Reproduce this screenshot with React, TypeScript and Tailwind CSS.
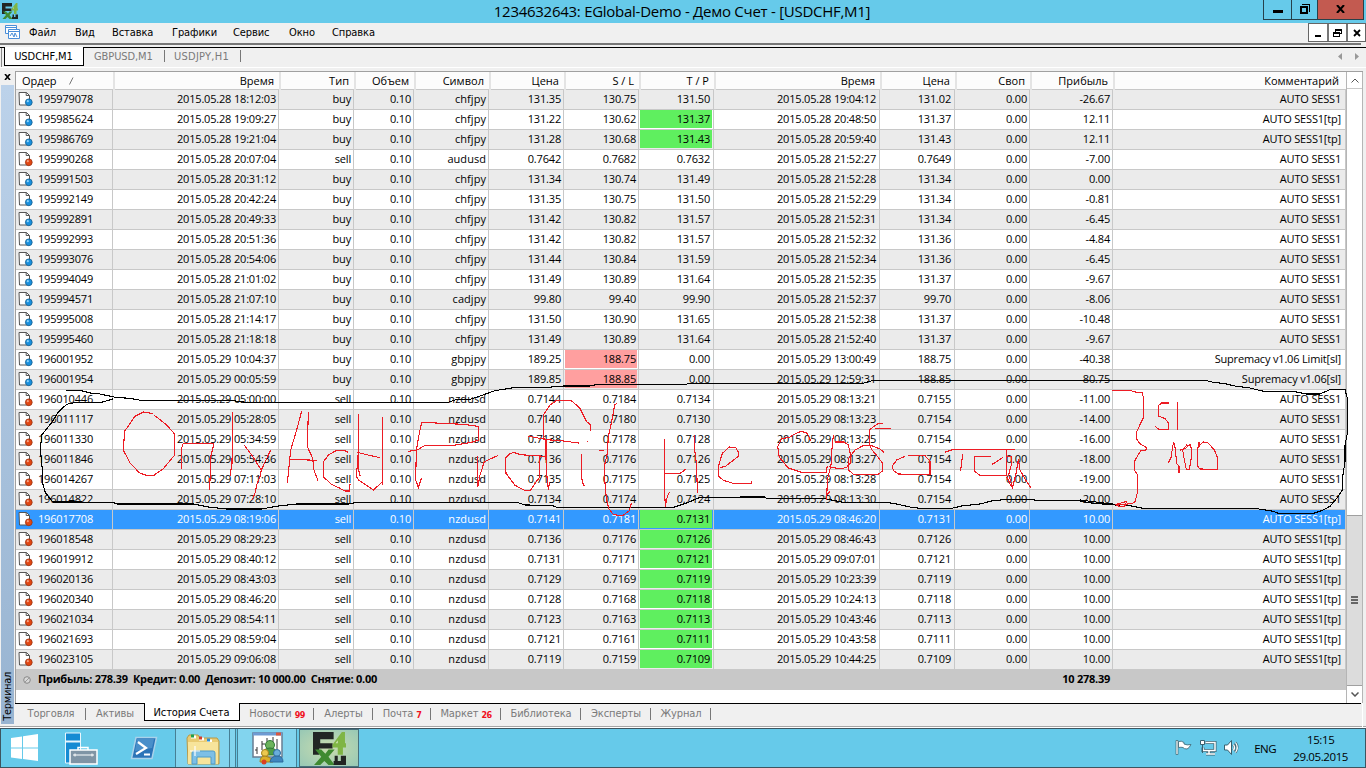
import type { ReactNode } from 'react';
import clsx from 'clsx';

type Order = {
  id: string;
  opened: string;
  type: 'buy' | 'sell';
  symbol: string;
  price: string;
  sl: string;
  tp: string;
  closed: string;
  closePrice: string;
  profit: string;
  comment: string;
};

const raw = `195979078|2015.05.28 18:12:03|buy|chfjpy|131.35|130.75|131.50|2015.05.28 19:04:12|131.02|-26.67|AUTO SESS1
195985624|2015.05.28 19:09:27|buy|chfjpy|131.22|130.62|131.37|2015.05.28 20:48:50|131.37|12.11|AUTO SESS1[tp]
195986769|2015.05.28 19:21:04|buy|chfjpy|131.28|130.68|131.43|2015.05.28 20:59:40|131.43|12.11|AUTO SESS1[tp]
195990268|2015.05.28 20:07:04|sell|audusd|0.7642|0.7682|0.7632|2015.05.28 21:52:27|0.7649|-7.00|AUTO SESS1
195991503|2015.05.28 20:31:12|buy|chfjpy|131.34|130.74|131.49|2015.05.28 21:52:28|131.34|0.00|AUTO SESS1
195992149|2015.05.28 20:42:24|buy|chfjpy|131.35|130.75|131.50|2015.05.28 21:52:29|131.34|-0.81|AUTO SESS1
195992891|2015.05.28 20:49:33|buy|chfjpy|131.42|130.82|131.57|2015.05.28 21:52:31|131.34|-6.45|AUTO SESS1
195992993|2015.05.28 20:51:36|buy|chfjpy|131.42|130.82|131.57|2015.05.28 21:52:32|131.36|-4.84|AUTO SESS1
195993076|2015.05.28 20:54:06|buy|chfjpy|131.44|130.84|131.59|2015.05.28 21:52:34|131.36|-6.45|AUTO SESS1
195994049|2015.05.28 21:01:02|buy|chfjpy|131.49|130.89|131.64|2015.05.28 21:52:35|131.37|-9.67|AUTO SESS1
195994571|2015.05.28 21:07:10|buy|cadjpy|99.80|99.40|99.90|2015.05.28 21:52:37|99.70|-8.06|AUTO SESS1
195995008|2015.05.28 21:14:17|buy|chfjpy|131.50|130.90|131.65|2015.05.28 21:52:38|131.37|-10.48|AUTO SESS1
195995460|2015.05.28 21:18:18|buy|chfjpy|131.49|130.89|131.64|2015.05.28 21:52:40|131.37|-9.67|AUTO SESS1
196001952|2015.05.29 10:04:37|buy|gbpjpy|189.25|188.75|0.00|2015.05.29 13:00:49|188.75|-40.38|Supremacy v1.06 Limit[sl]
196001954|2015.05.29 00:05:59|buy|gbpjpy|189.85|188.85|0.00|2015.05.29 12:59:31|188.85|80.75|Supremacy v1.06[sl]
196010446|2015.05.29 05:00:00|sell|nzdusd|0.7144|0.7184|0.7134|2015.05.29 08:13:21|0.7155|-11.00|AUTO SESS1
196011117|2015.05.29 05:28:05|sell|nzdusd|0.7140|0.7180|0.7130|2015.05.29 08:13:23|0.7154|-14.00|AUTO SESS1
196011330|2015.05.29 05:34:59|sell|nzdusd|0.7138|0.7178|0.7128|2015.05.29 08:13:25|0.7154|-16.00|AUTO SESS1
196011846|2015.05.29 05:54:36|sell|nzdusd|0.7136|0.7176|0.7126|2015.05.29 08:13:27|0.7154|-18.00|AUTO SESS1
196014267|2015.05.29 07:11:03|sell|nzdusd|0.7135|0.7175|0.7125|2015.05.29 08:13:28|0.7154|-19.00|AUTO SESS1
196014822|2015.05.29 07:28:10|sell|nzdusd|0.7134|0.7174|0.7124|2015.05.29 08:13:30|0.7154|20.00|AUTO SESS1
196017708|2015.05.29 08:19:06|sell|nzdusd|0.7141|0.7181|0.7131|2015.05.29 08:46:20|0.7131|10.00|AUTO SESS1[tp]
196018548|2015.05.29 08:29:23|sell|nzdusd|0.7136|0.7176|0.7126|2015.05.29 08:46:43|0.7126|10.00|AUTO SESS1[tp]
196019912|2015.05.29 08:40:12|sell|nzdusd|0.7131|0.7171|0.7121|2015.05.29 09:07:01|0.7121|10.00|AUTO SESS1[tp]
196020136|2015.05.29 08:43:03|sell|nzdusd|0.7129|0.7169|0.7119|2015.05.29 10:23:39|0.7119|10.00|AUTO SESS1[tp]
196020340|2015.05.29 08:46:20|sell|nzdusd|0.7128|0.7168|0.7118|2015.05.29 10:24:13|0.7118|10.00|AUTO SESS1[tp]
196021034|2015.05.29 08:54:11|sell|nzdusd|0.7123|0.7163|0.7113|2015.05.29 10:43:46|0.7113|10.00|AUTO SESS1[tp]
196021693|2015.05.29 08:59:04|sell|nzdusd|0.7121|0.7161|0.7111|2015.05.29 10:43:58|0.7111|10.00|AUTO SESS1[tp]
196023105|2015.05.29 09:06:08|sell|nzdusd|0.7119|0.7159|0.7109|2015.05.29 10:44:25|0.7109|10.00|AUTO SESS1[tp]`;

const orders: Order[] = raw.split('\n').map((line) => {
  const [id, opened, type, symbol, price, sl, tp, closed, closePrice, profit, comment] = line.split('|');
  return { id, opened, type: type as Order['type'], symbol, price, sl, tp, closed, closePrice, profit, comment };
});

const SELECTED = '196017708';

const columns = 'grid grid-cols-[97px_166px_75px_60px_75px_75px_75px_75px_166px_75px_75px_83px_233px]';
const headers = ['Время', 'Тип', 'Объем', 'Символ', 'Цена', 'S / L', 'T / P', 'Время', 'Цена', 'Своп', 'Прибыль', 'Комментарий'];

const menu = [
  { label: 'Файл', width: 'w-[43px]' },
  { label: 'Вид', width: 'w-[34px]' },
  { label: 'Вставка', width: 'w-[57px]' },
  { label: 'Графики', width: 'w-[58px]' },
  { label: 'Сервис', width: 'w-[53px]' },
  { label: 'Окно', width: 'w-[40px]' },
  { label: 'Справка', width: 'w-[60px]' },
];

const tabs: { label: string; width: string; badge?: string; active?: boolean }[] = [
  { label: 'Торговля', width: 'w-[70px]' },
  { label: 'Активы', width: 'w-[58px]' },
  { label: 'История Счета', width: 'w-[96px]', active: true },
  { label: 'Новости', width: 'w-[74px]', badge: '99' },
  { label: 'Алерты', width: 'w-[59px]' },
  { label: 'Почта', width: 'w-[58px]', badge: '7' },
  { label: 'Маркет', width: 'w-[70px]', badge: '26' },
  { label: 'Библиотека', width: 'w-[80px]' },
  { label: 'Эксперты', width: 'w-[70px]' },
  { label: 'Журнал', width: 'w-[60px]' },
];

function AppLogo({ size }: { size: number }) {
  return (
    <svg width={size} height={size} viewBox="0 0 32 32">
      <path d="M0 0h20v7H7v4h12v5H6v6H0z" fill="#222624" />
      <path d="M19 12 28 0h3v11h1v4h-3v7h-5v-7h-5z" fill="#7fb545" />
      <path d="M24 11V8l-2 3z" fill="#d6e8bd" />
      <path d="M2 17h6l4 4 3-4h6l-6 7 6 8h-6l-4-4-4 4H1l7-8z" fill="#3f8a31" />
      <path d="M21 23h3v5h3v-5h5v9H20v-4h1z" fill="#222624" />
    </svg>
  );
}

function OrderIcon({ type }: { type: Order['type'] }) {
  const sell = type === 'sell';
  return (
    <svg width="15" height="16" viewBox="0 0 15 16">
      <path d="M1 1.5h7.5l3 3v9.5h-10z" fill="#fff" stroke="#555" strokeLinejoin="round" />
      <path d="M8.2 1.5v3h3.2" fill="none" stroke="#555" />
      <circle cx="10.8" cy="11.3" r="3.4" fill={sell ? '#e04713' : '#1a8fdc'} stroke={sell ? '#9c3210' : '#17608f'} strokeWidth=".8" />
      <circle cx="9.8" cy="10.2" r="1.1" fill={sell ? '#f6a184' : '#8fd4fb'} />
    </svg>
  );
}

function Cell({ children, hit, pad = 'pr-px' }: { children: ReactNode; hit?: 'tp' | 'sl'; pad?: string }) {
  return (
    <div className="border-r border-b border-[#c8c8c8]">
      <div
        className={clsx(
          'mr-px ml-px h-[18px] text-right',
          pad,
          hit === 'tp' && 'bg-[#5fef5f] text-black',
          hit === 'sl' && 'bg-[#ff9f9f] text-black',
        )}
      >
        {children}
      </div>
    </div>
  );
}

function OrderRow({ order, index }: { order: Order; index: number }) {
  return (
    <div
      className={clsx(
        columns,
        'h-5 leading-[17px]',
        order.id === SELECTED ? 'bg-[#3399ff] text-white' : index % 2 ? 'bg-white' : 'bg-[#ebebeb]',
      )}
    >
      <div className="flex gap-[5px] border-r border-b border-[#c8c8c8] pt-px pl-[2px] leading-[15px]">
        <OrderIcon type={order.type} />
        {order.id}
      </div>
      <Cell>{order.opened}</Cell>
      <Cell>{order.type}</Cell>
      <Cell>0.10</Cell>
      <Cell>
        <span className="tracking-[0.05px]">{order.symbol}</span>
      </Cell>
      <Cell>{order.price}</Cell>
      <Cell hit={order.comment.endsWith('[sl]') ? 'sl' : undefined}>{order.sl}</Cell>
      <Cell hit={order.comment.endsWith('[tp]') ? 'tp' : undefined} pad="pr-[2px]">
        {order.tp}
      </Cell>
      <Cell pad="pr-[2px]">{order.closed}</Cell>
      <Cell pad="pr-[2px]">{order.closePrice}</Cell>
      <Cell>0.00</Cell>
      <Cell>{order.profit}</Cell>
      <Cell pad="pr-[3px]">{order.comment}</Cell>
    </div>
  );
}

function TitleBar() {
  return (
    <header className="flex h-[23px] justify-between bg-[#66caea]">
      <div className="w-[101px] pt-[3px] pl-[2px]">
        <AppLogo size={16} />
      </div>
      <h1 className="font-['Open_Sans',sans-serif] text-[15px] leading-[23px] tracking-[-0.27px] whitespace-nowrap">
        1234632643: EGlobal-Demo - Демо Счет - [USDCHF,M1]
      </h1>
      <div className="mr-[2px] flex h-5 border-x border-b border-[#26414b]">
        <div className="flex w-[27px] justify-center pt-[10px]">
          <div className="h-[3px] w-[10px] bg-black" />
        </div>
        <div className="flex w-[26px] justify-center border-l border-[#26414b] pt-1">
          <svg width="10" height="10" viewBox="0 0 10 10" shapeRendering="crispEdges">
            <path d="M2 .5h7.500v7" fill="none" stroke="#000" />
            <path d="M1 3h6v6h-6z" fill="none" stroke="#000" strokeWidth="2" />
          </svg>
        </div>
        <div className="flex w-[46px] justify-center border-l border-[#26414b] bg-[#c35a50] pt-[5px]">
          <svg width="9" height="8" viewBox="0 0 9 8">
            <path d="M1 0l7 8M8 0l-7 8" stroke="#000" strokeWidth="2" />
          </svg>
        </div>
      </div>
    </header>
  );
}

function MenuBar() {
  return (
    <nav className="flex h-5 justify-between bg-[#f0f0f0]">
      <div className="flex text-[11px] leading-[20px] tracking-[-0.1px]">
        <div className="w-[29px] pt-[2px] pl-[5px]">
          <svg width="15" height="14" viewBox="0 0 15 14" fill="#fff" stroke="#4a8ed8">
            <path d="M.5.500h11v8H.5zM.5 2.500h11" />
            <path d="M3.500 4.500h11v9h-11zM3.500 6.500h11M5 11l2-3 2 4 1-4 2 4" />
          </svg>
        </div>
        <div className="flex gap-[3px]">
          {menu.map((item) => (
            <span key={item.label} className={clsx(item.width, 'whitespace-nowrap')}>
              {item.label}
            </span>
          ))}
        </div>
      </div>
      <div className="flex h-[19px] border border-[#666] bg-white">
        <div className="flex w-[18px] justify-center pt-[11px]">
          <div className="h-[2px] w-[6px] bg-black" />
        </div>
        <div className="flex w-[19px] justify-center border-l-2 border-[#777] pt-[5px]">
          <svg width="9" height="8" viewBox="0 0 9 8" fill="none" stroke="#000" shapeRendering="crispEdges">
            <path d="M2.500 2.500v-2h6v4h-2M2 1h7M.5 3.500h6v4h-6zM0 4h7" />
          </svg>
        </div>
        <div className="flex w-[19px] justify-center border-l-2 border-[#777] pt-[5px]">
          <svg width="8" height="8" viewBox="0 0 8 8">
            <path d="M1 1l6 6M7 1l-6 6" stroke="#000" strokeWidth="1.800" />
          </svg>
        </div>
      </div>
    </nav>
  );
}

function ChartTabs() {
  return (
    <div className="mt-[2px] flex h-[20px] border-t border-black bg-[#f0f0f0] text-[11px] leading-[17px] text-[#7a7a7a]">
      <div className="ml-px w-[3px] border-l border-[#888]" />
      <div className="-mt-px h-[19px] w-[80px] border-x border-b border-black bg-white pt-px pr-px text-center tracking-[-0.05px] text-black">
        USDCHF,M1
      </div>
      <div className="mt-[2px] ml-[10px] h-3 w-[70px] leading-[13px] tracking-[-0.1px]">GBPUSD,M1</div>
      <div className="mt-[2px] h-3 border-l border-[#777] pl-[9px] leading-[13px] tracking-[0.25px]">USDJPY,H1</div>
      <div className="mt-[2px] ml-[11px] h-3 w-px bg-[#777]" />
      <div className="mr-[7px] ml-auto flex gap-[13px] pt-[5px]">
        <svg width="4" height="8" viewBox="0 0 4 8" fill="#999">
          <path d="M4 0v7L0 3.500z" />
        </svg>
        <svg width="4" height="8" viewBox="0 0 4 8" fill="#999">
          <path d="M0 0v7l4-3.500z" />
        </svg>
      </div>
    </div>
  );
}

function SidePanel() {
  return (
    <aside className="flex w-[15px] flex-col items-end pr-px">
      <div className="flex h-[14px] w-[14px] justify-center pt-[3px]">
        <svg width="7" height="6" viewBox="0 0 7 6">
          <path d="M1 0l5 6M6 0L1 6" stroke="#000" strokeWidth="1.600" />
        </svg>
      </div>
      <div className="flex h-[639px] w-[13px] items-end justify-center bg-linear-to-b from-[#bcd2ea] to-[#98b4d1] pb-[3px]">
        <span className="rotate-180 font-['DejaVu_Sans_Condensed','DejaVu_Sans',sans-serif] text-[11px] leading-[13px] tracking-[-0.3px] whitespace-nowrap [writing-mode:vertical-rl]">
          Терминал
        </span>
      </div>
    </aside>
  );
}

function ScrollBar() {
  return (
    <div className="flex h-[631px] w-[17px] flex-col border-x border-[#b5b5b5] bg-white">
      <div className="flex h-[17px] items-center justify-center border-b border-[#c8c8c8]">
        <svg width="8" height="5" viewBox="0 0 8 5">
          <path d="M.5 4.500L4 1l3.500 3.500" fill="none" stroke="#555" />
        </svg>
      </div>
      <div className="mt-[426px] flex h-[171px] flex-col items-center justify-center gap-px border-y border-[#a0a0a0] bg-[#dcdcdc] pb-[2px]">
        <div className="h-[2px] w-[7px] bg-[#666]" />
        <div className="h-[2px] w-[7px] bg-[#666]" />
        <div className="h-[2px] w-[7px] bg-[#666]" />
      </div>
      <div className="flex h-[17px] items-center justify-center">
        <svg width="8" height="5" viewBox="0 0 8 5">
          <path d="M.5.500L4 4 7.500.5" fill="none" stroke="#555" strokeWidth="1.500" />
        </svg>
      </div>
    </div>
  );
}

function History() {
  return (
    <div className="w-[1330px] border-t border-[#a0a0a0] bg-white font-['Open_Sans',sans-serif] text-[11px] tracking-[-0.18px]">
      <div className={clsx(columns, 'h-[18px] border-b border-[#c8c8c8] bg-[#fcfcfc] leading-[18px] tracking-[0.02px]')}>
        <div className="flex pl-[6px]">
          Ордер
          <svg className="mt-[5px] ml-[12px]" width="5" height="8" viewBox="0 0 5 8">
            <path d="M.5 7.500L4 .5" stroke="#777" />
          </svg>
        </div>
        {headers.map((label, i) => (
          <div key={i} className={clsx('border-l-2 border-[#e4e4e4] text-right', i === 11 ? 'pr-[7px]' : 'pr-[5px]')}>
            {label}
          </div>
        ))}
      </div>
      {orders.map((order, i) => (
        <OrderRow key={order.id} order={order} index={i} />
      ))}
      <div className={clsx(columns, 'h-5 bg-[#c8c8c8] font-bold leading-[17px] tracking-[-0.26px]')}>
        <div className="col-span-11 flex whitespace-pre">
          <svg className="mt-[6px] mr-[7px] ml-[7px]" width="8" height="8" viewBox="0 0 8 8">
            <circle cx="4" cy="4" r="3.300" fill="#d8d8d8" stroke="#888" />
            <path d="M2 6l4-4" stroke="#999" />
          </svg>
          {'Прибыль: 278.39  Кредит: 0.00  Депозит: 10 000.00  Снятие: 0.00'}
        </div>
        <div className="pr-[3px] text-right">10 278.39</div>
      </div>
    </div>
  );
}

function TerminalTabs() {
  return (
    <div className="flex h-[21px] w-[1346px] border-t border-black bg-[#f0f0f0] pl-px font-['DejaVu_Sans_Condensed','DejaVu_Sans',sans-serif] text-[11px] leading-[19px] tracking-[-0.1px] text-[#7a7a7a]">
      {tabs.map((tab) =>
        tab.active ? (
          <div key={tab.label} className={clsx(tab.width, '-mt-px h-[18px] border-x border-b border-black bg-white pr-px text-center leading-[19px] text-black')}>
            {tab.label}
          </div>
        ) : (
          <div key={tab.label} className={clsx(tab.width, 'relative flex justify-center whitespace-nowrap')}>
            {tab.label}
            {tab.badge && <span className="ml-[3px] pt-[2px] text-[9px] font-bold tracking-[-0.6px] text-[#f01020]">{tab.badge}</span>}
            {tab.label !== 'Активы' && <span className="absolute top-1 right-0 h-3 w-px bg-[#777]" />}
          </div>
        ),
      )}
    </div>
  );
}

function Taskbar() {
  return (
    <footer className="flex h-10 justify-between border border-[#3d5560] bg-[#66caea]">
      <div className="flex">
        <div className="w-[63px] pt-[5px] pl-[10px]">
          <svg width="28" height="28" viewBox="0 0 28 28" fill="#fff">
            <path d="M0 4l11-1.500v11H0zM12 2.300L27 0v13.500H12zM0 14.500h11V25L0 23.500zM12 14.500h15V27l-15-2z" />
          </svg>
        </div>
        <div className="w-[66px] pt-[3px]">
          <svg width="34" height="33" viewBox="0 0 34 33">
            <path d="M1.500 1h15v30h-15z" fill="#168bd3" stroke="#e9f6fd" />
            <path d="M1 9.500h16" stroke="#e9f6fd" strokeWidth="2" />
            <path d="M6 18h27v14H6z" fill="#7f94a5" stroke="#fff" strokeWidth="1.500" />
            <path d="M14 18v-2.500h10V18" fill="none" stroke="#fff" strokeWidth="1.500" />
            <path d="M9 23h21M11 21.500v3M28 21.500v3" fill="none" stroke="#fff" />
          </svg>
        </div>
        <div className="w-[45px] pt-[7px]">
          <svg width="28" height="25" viewBox="0 0 28 25">
            <path d="M6 1.500h20.500L22 22.500H1.500z" fill="#2b74b8" stroke="#a9d2ea" strokeWidth="1.500" />
            <path d="M7 3h17l-2 9L5 15z" fill="#5da1d5" opacity=".6" />
            <path d="M8 6l8 6-10 6M14 18.500h6" fill="none" stroke="#fff" strokeWidth="2.200" />
          </svg>
        </div>
        <div className="flex w-[55px] justify-center border-x border-[#477f94] bg-[#82d4ee] pt-[5px]">
          <svg width="34" height="32" viewBox="0 0 34 32">
            <path d="M1 4l2-3h9l2 3h17l2 3v23H2z" fill="#e9cb72" stroke="#b79a49" />
            <path d="M5 3h5M13 5h5M21 7h5" stroke="#fff" strokeWidth="3" />
            <path d="M5 2h3" stroke="#21a04a" strokeWidth="3" />
            <path d="M13 4h3" stroke="#d33e2c" strokeWidth="3" />
            <path d="M21 6h3" stroke="#2a8ed8" strokeWidth="3" />
            <path d="M2 8h30v22H2z" fill="#f7e49b" />
            <path d="M6 30V19q0-2 2-2h19q2 0 2 2v11h-4v-7H11v7z" fill="#7dbfe6" stroke="#4f9cc9" />
            <path d="M9 12v10M4 17h10" stroke="#fff" strokeWidth="1.200" />
          </svg>
        </div>
        <div className="w-[6px] border-r border-[#477f94] bg-[#82d4ee]" />
        <div className="ml-[1px] flex w-[60px] justify-center border-x border-[#477f94] bg-[#82d4ee] pt-[3px]">
          <svg width="33" height="34" viewBox="0 0 33 34">
            <path d="M2 1h29v24H2z" fill="#fff" stroke="#687e92" strokeWidth="1.500" />
            <path d="M2 2h29" stroke="#6e9bd3" strokeWidth="3" />
            <path d="M25 2h5" stroke="#d9573f" strokeWidth="3" />
            <path d="M6 15v7M4 18h2M11 9v9M11 12h3M16 6v6M22 5v8M26 7v10" fill="none" stroke="#333" />
            <circle cx="19" cy="13" r="4.500" fill="#6cb35c" stroke="#2f7a35" />
            <path d="M11 23q1-7 8-7t8 7z" fill="#4d9c47" stroke="#2f7a35" />
            <circle cx="14" cy="21" r="3.500" fill="#ecc94f" stroke="#a5821e" />
            <path d="M9 30q0-6 5-6 5 0 8 6z" fill="#dcae27" stroke="#a5821e" />
            <circle cx="26" cy="21" r="3.500" fill="#6aaedb" stroke="#2c6a9c" />
            <path d="M19 30q1-6 7-6t6 6z" fill="#3f86bf" stroke="#2c6a9c" />
            <circle cx="13" cy="30" r="2.500" fill="#d83f22" />
          </svg>
        </div>
        <div className="ml-[2px] flex w-[60px] justify-center border border-[#47707c] bg-radial from-[#c9dcae] to-[#97c8b5] pt-[2px]">
          <AppLogo size={33} />
        </div>
      </div>
      <div className="flex font-['Open_Sans',sans-serif] text-[11.500px] tracking-[-0.4px]">
        <svg className="mt-[9px]" width="66" height="20" viewBox="0 0 66 20" fill="none" stroke="#38616f">
          <path d="M1 2.500h2v14H1z" fill="#fff" strokeWidth=".7" />
          <path d="M3.500 3.500q3-1 5.500 1v1.500q3 1.500 7 .5-2 4-4 4.500-3 0-4-1.500-2-.5-4.500 0z" fill="#fff" strokeWidth=".8" />
          <path d="M30.500 4.500H40v8H28v-3M31 16h9M34 13v3" stroke="#38616f" strokeWidth="3" />
          <path d="M30.500 4.500H40v8H28v-3M31 16h9M34 13v3" stroke="#fff" strokeWidth="1.500" />
          <path d="M25.500 2.500h4v4h-4zM27.500 7v8" fill="#fff" />
          <path d="M49.500 7h3l4-4.500v14l-4-4.500h-3z" fill="#fff" />
          <path d="M58.500 6.500q2 3 0 6M60.500 4.500q3.500 5 0 10" stroke="#38616f" strokeWidth="2.500" />
          <path d="M58.500 6.500q2 3 0 6M60.500 4.500q3.500 5 0 10" stroke="#fff" strokeWidth="1.300" />
        </svg>
        <span className="ml-[13px] leading-[39px]">ENG</span>
        <div className="mr-[17px] ml-[17px] text-center leading-[17px]">
          <div className="mt-[2px]">15:15</div>
          <div>29.05.2015</div>
        </div>
      </div>
    </footer>
  );
}

// Hand drawn notes over the order list. Each group keeps its own origin, three units to a pixel.
const notes = [
  {
    transform: 'translate(20 370) scale(.33333)',
    black: [
      '138,61 180,61 212,69 240,72 278,80 285,82 330,85 362,91 480,91 630,91 680,97 1140,97',
      '278,87 245,97 168,97 140,103 115,126 95,158 77,180 65,195 61,240 67,300 68,340 76,367 92,389 100,396 180,396 240,398 280,398 292,402 520,402 565,411 620,417 724,417 775,408 830,402 985,402 1010,397 1140,397',
    ],
    red: [
      '400,131 370,126 345,139 320,175 314,183 310,240 330,279 358,308 375,315 400,317 430,296 464,255 464,192 440,165 412,143 403,136',
      '485,233 485,296 M485,233 490,220 581,220 578,238 572,260 571,300 569,360',
      '638,126 636,280 630,318',
      '673,226 697,258 724,300 752,240 M724,300 720,320 710,345 706,366 697,390',
      '845,123 830,180 812,240 806,300 802,338 M865,126 862,230 878,265 882,300 894,332 M810,268 892,271',
      '985,247 972,241 950,241 925,255 911,275 910,320 934,343 960,355 975,363 988,363 990,343',
      '1015,132 1015,245 1009,320 1016,330 1060,360 1088,335 M1088,142 1088,345 M1012,247 1040,254 1080,263 M1016,250 1014,290 1020,317',
    ],
  },
  {
    transform: 'translate(380 370) scale(.33333)',
    black: [
      '0,97 205,97 230,88 270,88 300,78 345,62 400,53 490,53 550,48 628,48 655,43 920,43 925,40 1140,40',
      '0,397 410,397 435,405 515,406 530,412 880,412 920,399 960,382 1140,382',
    ],
    red: [
      '84,244 110,241 135,226 220,226 275,217 295,210 295,169 250,163 125,157 118,190 109,240 107,330 115,352 124,325',
      '293,258 293,352 300,315 313,275 355,256',
      '495,259 420,254 402,247 388,252 376,265 378,310 405,346 438,363 452,360 478,322 478,260 500,259',
      '490,205 490,135 510,105 530,91 573,91 600,115 620,155 632,165 632,184 M490,205 498,208 498,265 502,340 506,360 508,335',
      '444,198 500,209 550,213 596,219 M622,214h2',
      '604,252 604,320 610,345 615,347',
      '710,101 704,105 697,145 685,200 682,250 673,290 675,340 679,385 686,415 700,434 728,437 748,422 754,400 M657,241 671,241',
      '853,207 853,345 856,410 M856,310 900,310 917,298 M856,408 862,380 868,367 M943,196 944,240 950,285 952,368',
      '1020,292 1035,290 1075,259 1076,247 1067,233 1048,231 1027,250 1015,290 1015,318 1030,331 1060,340 1115,340 1115,334',
    ],
  },
  {
    transform: 'translate(740 370) scale(.33333)',
    black: [
      '0,40 368,40 400,31 1140,31',
      '0,381 75,381 80,385 250,385 275,390 310,397 440,397 470,402 510,411 540,415 635,415 665,408 720,402 755,393 800,388 870,388 890,391 1010,391 1025,394 1060,400 1140,406',
    ],
    red: [
      '212,213 202,190 184,184 168,190 150,201 125,207 113,230 118,262 145,294 185,307 258,307 262,289',
      '280,196 276,235 274,280 262,330 260,390 M260,375 270,364',
      '284,216 312,216 325,225 333,260 331,279 320,292 305,296 278,293 268,290',
      '430,160 415,160 390,178 388,222 396,240 410,256 428,280 427,303 415,313 340,313 326,300 326,265 345,240 370,227 395,227 420,237 432,247 M404,175 452,175',
      '495,259 470,270 457,288 460,302 475,312 570,314 570,274 555,257 503,257',
      '614,247 638,239 825,239',
      '668,252 662,302',
      '752,259 704,259 704,304 720,316 800,317 800,240 M755,284 790,262 M800,260 814,260 814,284 806,315 818,352 828,310 835,268 840,300 860,335 872,353 M800,320 815,352',
    ],
  },
  {
    transform: 'translate(1080 370) scale(.33333)',
    black: [
      '0,31 375,31 400,37 435,41 465,48 510,54 555,65 645,65 680,72 720,72 752,58 795,58 802,85 802,190 795,225 795,275 788,320 788,358 770,385 750,409 727,421 700,430 595,430 580,424 525,415 190,415 140,405 95,402 0,390',
    ],
    red: [
      '97,61 150,61 165,66 187,67 191,88 190,143 182,160 170,185 169,206 180,221 201,234 197,240 182,242 164,273 163,300 173,314 173,365 165,395 155,401 130,403 105,404 118,409 135,408 140,394 105,404',
      '267,99 245,99 235,107 235,138 255,146 266,160 265,178 237,178 226,170',
      '293,96 293,180',
      '265,279 273,262 280,219 284,222 290,280 297,290 297,308',
      '299,241 316,236 330,222 335,240 333,270 328,298 319,298 313,270 308,240 320,225 330,226',
      '357,215 357,230 352,235 352,288 360,297 413,298 413,264 402,238 383,218 370,216 357,228',
    ],
  },
];

function Notes() {
  return (
    <svg className="pointer-events-none absolute top-0 left-0" width="1366" height="768" viewBox="0 0 1366 768" fill="none" strokeWidth="3.300" shapeRendering="crispEdges">
      {notes.map((group) => (
        <g key={group.transform} transform={group.transform}>
          {group.black.map((d) => (
            <path key={d} d={`M${d}`} stroke="#000" />
          ))}
          {group.red.map((d) => (
            <path key={d} d={`M${d}`} stroke="#ed1c24" />
          ))}
        </g>
      ))}
    </svg>
  );
}

export default function App() {
  return (
    <div className="relative h-[768px] w-[1366px] overflow-hidden bg-[#f0f0f0] font-['DejaVu_Sans_Condensed','DejaVu_Sans',sans-serif] text-black">
      <TitleBar />
      <MenuBar />
      <div className="h-[2px] w-[1361px] bg-[#777]" />
      <ChartTabs />
      <div className="mb-[3px] h-px bg-white" />
      <main className="flex h-[656px]">
        <SidePanel />
        <div className="w-[1348px] border-r border-white">
          <div className="flex h-[632px] border-l border-[#a0a0a0] bg-white">
            <History />
            <div className="border-t border-[#a0a0a0]">
              <ScrollBar />
            </div>
          </div>
          <TerminalTabs />
        </div>
      </main>
      <div className="mt-[-1px] h-px bg-[#a5a5a5]" />
      <div className="h-px bg-white" />
      <Taskbar />
      <Notes />
    </div>
  );
}
